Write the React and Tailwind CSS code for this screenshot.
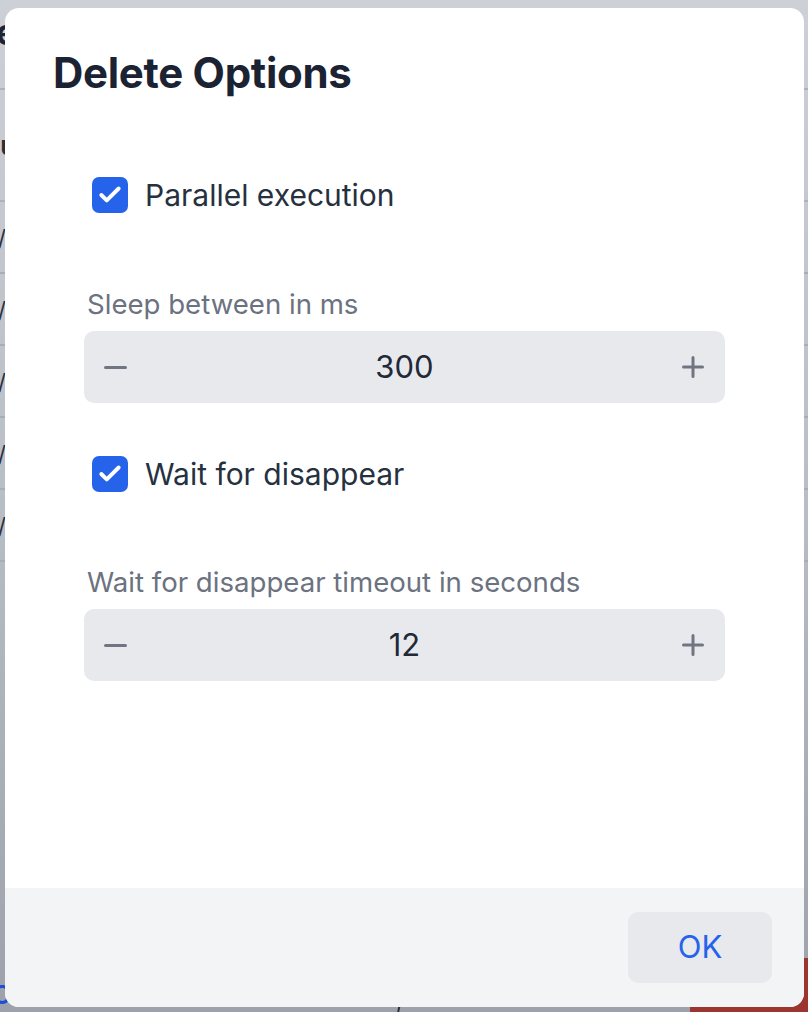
import { Check } from 'lucide-react'

const FONT = { fontFamily: 'Inter, "Noto Sans", "Liberation Sans", sans-serif' }

function Checkbox({ label }) {
  return (
    <label className="flex items-center gap-[17px] pl-[8px]">
      <span className="flex h-[36px] w-[36px] items-center justify-center rounded-[7px] bg-[#2563eb]">
        <Check size={26} strokeWidth={3.6} color="#ffffff" />
      </span>
      <span className="text-[30px] leading-[36px] text-[#263140]">{label}</span>
    </label>
  )
}

function Stepper({ value }) {
  return (
    <div className="flex h-[72px] items-center justify-between rounded-[10px] bg-[#e8e9ed] pl-[20px] pr-[21px]">
      <svg width="23" height="23" viewBox="0 0 23 23" fill="none" stroke="#6f7682" strokeWidth="3" strokeLinecap="round">
        <path d="M1.5 11.5h20" />
      </svg>
      <span className="text-[31px] text-[#1f2937]">{value}</span>
      <svg width="22" height="22" viewBox="0 0 22 22" fill="none" stroke="#6f7682" strokeWidth="3" strokeLinecap="round">
        <path d="M1.5 11h19M11 1.5v19" />
      </svg>
    </div>
  )
}

export default function App() {
  return (
    <div
      className="relative h-[1012px] w-[808px] overflow-hidden bg-gradient-to-b from-[#cdd0d6] via-[#b9bdc5] to-[#9ca1ab]"
      style={FONT}
    >
      {/* page behind the overlay */}
      <div className="flex flex-col">
        <div className="h-[90px] border-b-2 border-[#aeb2ba] pt-[14px] -ml-[18px] text-[36px] font-bold leading-none text-[#1f2430]">
          re
        </div>
        <div className="h-[112px] border-b-2 border-[#aeb2ba] pt-[36px] -ml-[16px] text-[26px] font-bold text-[#2a2f3a]">
          nu
        </div>
        {[0, 1, 2, 3, 4].map((i) => (
          <div
            key={i}
            className="h-[72px] border-b-2 border-[#a9adb5] pt-[20px] -ml-[10px] text-[22px] text-[#2a2f3a]"
          >
            //
          </div>
        ))}
      </div>
      <div className="absolute bottom-0 right-0 h-[54px] w-[118px] bg-[#9c3530]" />
      <div className="absolute bottom-[4px] -left-[8px] text-[26px] font-semibold leading-none text-[#1d4ed8]">C</div>
      <div className="absolute bottom-0 left-[398px] h-[8px] w-[2px] rotate-12 bg-[#2a2f3a]" />

      {/* modal */}
      <div className="absolute left-[5px] top-[8px] flex h-[999px] w-[799px] flex-col overflow-hidden rounded-[14px] bg-white">
        <div className="flex-1">
          <h2 className="pl-[48px] pt-[37px] text-[42px] font-bold leading-[56px] tracking-[-0.3px] text-[#1b2333]">
            Delete Options
          </h2>
          <div className="px-[79px]">
            <div className="pt-[76px]">
              <Checkbox label="Parallel execution" />
            </div>
            <p className="pt-[74px] pl-[3px] text-[27.6px] leading-[34px] text-[#6b7280]">Sleep between in ms</p>
            <div className="pt-[10px]">
              <Stepper value="300" />
            </div>
            <div className="pt-[53px]">
              <Checkbox label="Wait for disappear" />
            </div>
            <p className="pt-[73px] pl-[3px] text-[27.6px] leading-[34px] text-[#6b7280]">
              Wait for disappear timeout in seconds
            </p>
            <div className="pt-[10px]">
              <Stepper value="12" />
            </div>
          </div>
        </div>
        <div className="flex h-[119px] justify-end bg-[#f3f4f6] pr-[32px] pt-[24px]">
          <button className="h-[71px] w-[144px] rounded-[10px] bg-[#e8e9ed] text-[31px] text-[#2563eb]">OK</button>
        </div>
      </div>
    </div>
  )
}
